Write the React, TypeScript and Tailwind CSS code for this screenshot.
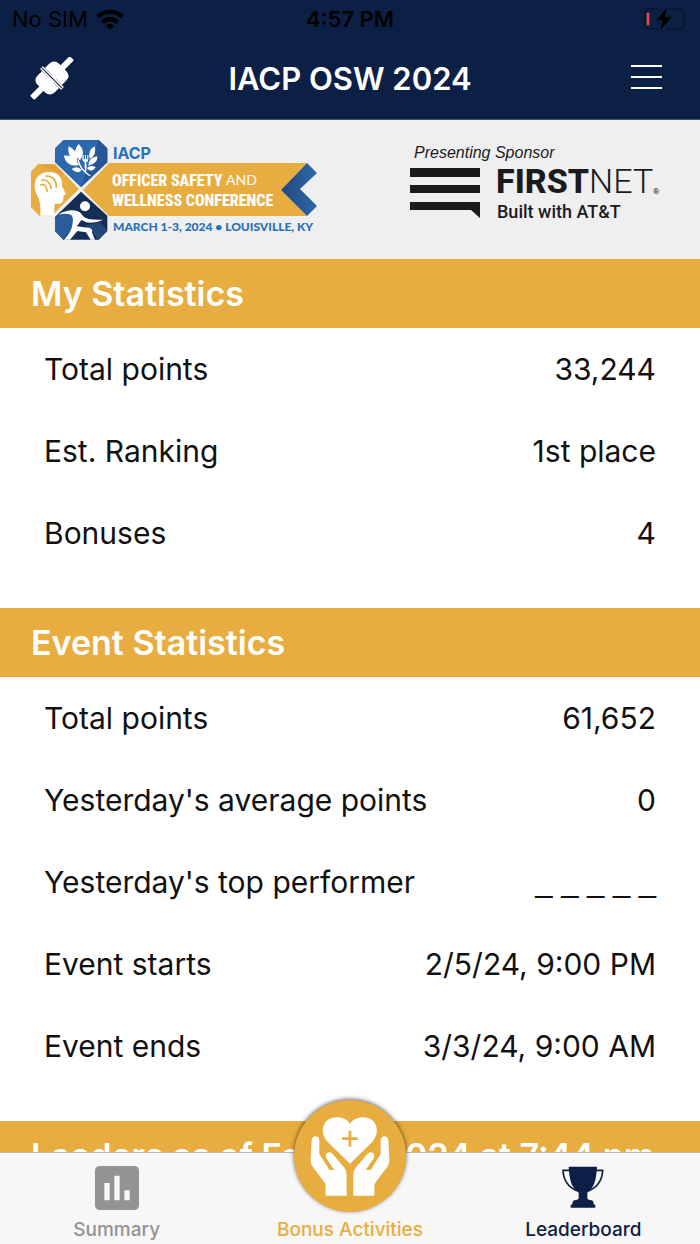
import React from "react";

interface StatItem {
  label: string;
  value: string;
}

interface StatSectionProps {
  title: string;
  items: StatItem[];
}

const myStats: StatItem[] = [
  { label: "Total points", value: "33,244" },
  { label: "Est. Ranking", value: "1st place" },
  { label: "Bonuses", value: "4" },
];

const eventStats: StatItem[] = [
  { label: "Total points", value: "61,652" },
  { label: "Yesterday's average points", value: "0" },
  { label: "Yesterday's top performer", value: "_ _ _ _ _" },
  { label: "Event starts", value: "2/5/24, 9:00 PM" },
  { label: "Event ends", value: "3/3/24, 9:00 AM" },
];

const SectionTitle: React.FC<{ children: React.ReactNode }> = ({ children }) => (
  <h2 className="flex h-[69px] items-center bg-[#e8ad40] px-[31px] text-[34px] font-semibold whitespace-nowrap text-white">
    {children}
  </h2>
);

const StatSection: React.FC<StatSectionProps> = ({ title, items }) => (
  <section>
    <SectionTitle>{title}</SectionTitle>
    <dl className="px-11 pb-[34px]">
      {items.map((item) => (
        <div key={item.label} className="flex h-[82px] items-center justify-between text-[30px] text-[#111]">
          <dt>{item.label}</dt>
          <dd className={item.value.startsWith("_") ? "font-['Liberation_Sans'] text-[31px]" : undefined}>{item.value}</dd>
        </div>
      ))}
    </dl>
  </section>
);

const StatusBar = () => (
  <div className="grid h-[38px] grid-cols-3 items-center px-3 text-[22px] text-black">
    <div className="flex items-center gap-2">
      <span>No SIM</span>
      <svg width="28" height="21" viewBox="0 0 84 62" fill="none" stroke="currentColor" strokeWidth="13">
        <path d="M5 23 C26 3 58 3 79 23" />
        <path d="M19 40 C32 27 52 27 65 40" />
        <path d="M42 62 L29 50 C37 43 47 43 55 50 Z" fill="currentColor" stroke="none" />
      </svg>
    </div>
    <span className="text-center font-semibold">4:57 PM</span>
    <svg className="justify-self-end" width="44" height="22" viewBox="0 0 132 66" fill="none">
      <path d="M42 3 H18 Q2 3 2 18 V48 Q2 63 18 63 H42 M76 3 H104 Q120 3 120 18 V48 Q120 63 104 63 H64" stroke="#07142d" strokeWidth="4" />
      <path d="M127 24 Q132 33 127 42 Z" fill="#07142d" />
      <rect x="8" y="14" width="8" height="38" rx="2" fill="#e5484d" />
      <path d="M68 0 L37 37 H56 L49 66 L83 28 H63 Z" fill="#000" />
    </svg>
  </div>
);

const Header = () => (
  <header className="h-[120px] shrink-0 border-b border-[#48506a] bg-[#0c2046] text-white">
    <StatusBar />
    <div className="grid h-[82px] grid-cols-[1fr_auto_1fr] items-center px-[30px]">
      <button type="button" aria-label="Connect device" className="justify-self-start">
        <svg width="44" height="44" viewBox="-22 -21 44 44" fill="currentColor">
          <g transform="rotate(-45)">
            <rect x="-28" y="-3" width="56" height="6" rx="1" />
            <path d="M-2 -12 H-8 Q-15 -12 -15 -5 V5 Q-15 12 -8 12 H-2 Z" />
            <path d="M2 -12 H8 Q15 -12 15 -5 V5 Q15 12 8 12 H2 Z" />
            <rect x="-2" y="-15" width="4" height="30" rx="1" />
            <path d="M0 -15 V15" stroke="#0c2046" strokeWidth="1" />
          </g>
        </svg>
      </button>
      <h1 className="text-[31px] font-semibold">IACP OSW 2024</h1>
      <button type="button" aria-label="Menu" className="mr-2 justify-self-end">
        <svg width="32" height="28" viewBox="0 0 32 28" stroke="currentColor" strokeWidth="2">
          <path d="M1 1 H32 M1 12 H32 M1 23 H32" />
        </svg>
      </button>
    </div>
  </header>
);

const ConferenceLogo = () => (
  <svg className="overflow-visible" width="290" height="104" viewBox="30 138 290 104" role="img" aria-label="IACP Officer Safety and Wellness Conference">
    <defs>
      <linearGradient id="arrow" x1="0" x2="1">
        <stop offset="0" stopColor="#234879" />
        <stop offset="1" stopColor="#2c68aa" />
      </linearGradient>
    </defs>
    <path d="M83 190 L109 163 H307 L281 190 L307 216 H109 Z" fill="#e8ad40" />
    <path d="M307 163 L317 173 L300 189 L317 206 L307 216 L281 190 Z" fill="url(#arrow)" />
    <g transform="translate(20 125) scale(0.33333)">
      {/* nutrition */}
      <path d="M130 45 H236 L262 70 V112 L183 187 L105 112 V70 Z" fill="#2b68ae" />
      <path d="M236 45 L262 70 V112 L183 187 Z" fill="#245794" />
      <g fill="#fff">
        <path d="M176 57 Q200 80 180 106 Q153 84 176 57 Z" />
        <path d="M146 64 Q176 78 171 110 Q140 98 146 64 Z" />
        <path d="M131 92 Q162 88 177 120 Q141 129 131 92 Z" />
        <path d="M155 132 Q171 120 185 134 Q173 150 155 132 Z" />
        <path d="M224 64 Q231 91 210 101 Q201 77 224 64 Z" />
        <path d="M232 94 Q233 117 205 122 Q206 97 232 94 Z" />
        <path d="M227 127 Q214 146 201 130 Q211 117 227 127 Z" />
        <path d="M187 90 V103 Q188 111 194 112 V130 H199 V112 Q205 110 205 103 V90 H202 V103 H198 V90 H195 V103 H191 V90 Z" />
      </g>
      <path d="M174 104 Q180 135 211 153 M197 118 V143" fill="none" stroke="#fff" strokeWidth="4" />

      {/* mental health */}
      <path d="M55 117 H105 L177 192 L105 262 L94 272 H58 L33 247 V140 Z" fill="#e8ad40" />
      <path d="M60 120 H102 L132 150 L98 137 Z" fill="#dfa238" />
      <path d="M61 272 Q64 231 51 210 C36 176 46 142 88 141 C116 141 130 162 126 183 L138 208 L130 212 L131 218 L129 224 Q128 236 117 236 H104 L102 272 Z" fill="#fff" />
      <path d="M63 166 Q88 160 94 192 M60 180 Q80 174 82 201 M75 153 Q109 151 109 188" fill="none" stroke="#e8ad40" strokeWidth="5" />

      {/* fitness */}
      <path d="M183 200 L262 272 V318 L236 344 H130 L105 318 V276 Z" fill="#152d55" />
      <path d="M130 258 L105 279 V318 L130 344 L180 280 Z" fill="#2b5d98" />
      <path d="M196 301 L240 292 L261 315 L236 344 Z" fill="#234776" />
      <circle cx="195" cy="244" r="15" fill="#fff" />
      <path d="M115 270 Q142 251 172 258 Q182 261 189 273 Q202 287 250 284 Q225 296 199 292 L184 285 Q176 297 170 304 L209 309 Q219 313 216 323 L225 344 H212 L198 322 L172 318 L150 344 H132 Q157 318 158 293 Q161 278 154 270 Q137 262 115 270 Z" fill="#fff" />
    </g>
    <text x="113" y="159" className="fill-[#2871b7] font-[Inter] text-[16px] font-bold">IACP</text>
    <g className="fill-white font-['Liberation_Sans_Narrow','Roboto_Condensed','Liberation_Sans'] font-extrabold">
      <text x="112" y="186" className="text-[16px]">OFFICER SAFETY</text>
      <text x="112" y="206" className="text-[16px]">WELLNESS CONFERENCE</text>
    </g>
    <text x="226" y="185" className="fill-white font-[Lato] text-[14px]">AND</text>
    <text x="113" y="231" className="fill-[#2871b7] font-[Lato] text-[12px] font-black">MARCH 1-3, 2024 • LOUISVILLE, KY</text>
  </svg>
);

const SponsorLogo = () => (
  <svg className="overflow-visible" width="249" height="104" viewBox="409 138 249 104" fill="#1b1b1d" role="img" aria-label="Presenting Sponsor FirstNet, Built with AT&T">
    <text x="414" y="158" className="font-['Liberation_Sans'] text-[16px] italic">Presenting Sponsor</text>
    <path d="M410 168 H480 V177 H410 Z M410 185 H480 V193 H410 Z M410 202 H480 V218 L471 210 H410 Z" />
    <text x="496" y="193" className="font-[Roboto] text-[34px] font-extrabold">
      FIRST<tspan className="font-light">NET</tspan>
    </text>
    <text x="653" y="194" className="font-[Roboto] text-[8px]">®</text>
    <text x="497" y="218" className="font-[Roboto] text-[18px] font-medium">Built with AT&amp;T</text>
  </svg>
);

const SummaryIcon = () => (
  <svg width="44" height="44" viewBox="0 0 132 132">
    <rect width="132" height="132" rx="14" fill="#939393" />
    <path d="M28 51 H44 V103 H28 Z M58 29 H74 V103 H58 Z M88 73 H104 V103 H88 Z" fill="#f7f7f7" />
  </svg>
);

const CareIcon = () => (
  <svg width="80" height="80" viewBox="180 108 240 240" fill="#fff">
    <path d="M300 251 L234 187 C204 154 220 112 262 112 C281 112 294 121 300 132 C306 121 320 112 338 112 C379 112 395 154 366 187 Z" />
    <path d="M276 176 H323 M300 152 V200" stroke="#e8ad40" strokeWidth="8" />
    <path d="M185 180 Q187 169 197 169 Q207 170 208 181 V222 L238 270 H253 L229 235 Q224 222 233 218 Q239 214 247 221 L282 262 Q290 272 290 285 V347 H227 V320 Q227 311 221 304 L188 260 Q182 252 182 240 Z" />
    <path d="M415 180 Q413 169 403 169 Q393 170 392 181 V222 L362 270 H347 L371 235 Q376 222 367 218 Q361 214 353 221 L318 262 Q310 272 310 285 V347 H373 V320 Q373 311 379 304 L412 260 Q418 252 418 240 Z" />
  </svg>
);

const TrophyIcon = () => (
  <svg width="42" height="44" viewBox="337 260 126 132" fill="#0c2046">
    <path d="M357 262 H442 C440 305 431 328 413 340 V358 Q416 362 425 363 Q432 364 432 375 L437 377 V385 H363 V377 L368 375 Q368 364 375 363 Q384 362 387 358 V340 C368 328 359 305 357 262 Z" />
    <path d="M359 273 H340 Q342 318 381 334 M440 273 H459 Q457 318 418 334" fill="none" stroke="#0c2046" strokeWidth="5" />
  </svg>
);

const TabBar = () => (
  <nav className="relative grid h-[92px] shrink-0 grid-cols-3 grid-rows-1 border-t border-[#b9b9b9] bg-[#f7f7f7] text-[19px] font-medium">
    <button type="button" className="flex min-h-0 flex-col items-center justify-end gap-1.5 text-[#939393]">
      <SummaryIcon />
      <span className="leading-7">Summary</span>
    </button>
    <button type="button" className="flex min-h-0 flex-col items-center justify-end gap-1 text-[#e8ad40]">
      <span className="flex size-28 shrink-0 items-center justify-center rounded-full bg-[#e8ad40] shadow-[0_-1px_4px_rgba(0,0,0,0.6)]">
        <CareIcon />
      </span>
      <span className="leading-7">Bonus Activities</span>
    </button>
    <button type="button" aria-current="page" className="flex min-h-0 flex-col items-center justify-end gap-1.5 text-[#0c2046]">
      <TrophyIcon />
      <span className="leading-7">Leaderboard</span>
    </button>
  </nav>
);

const App = () => {
  return (
    <div className="flex h-screen flex-col bg-white font-[Inter,sans-serif]">
      <Header />
      <main className="min-h-0 flex-1 overflow-y-auto [scrollbar-width:none]">
        <div className="flex h-[139px] items-center justify-between bg-[#efefef] pr-[42px] pl-[30px]">
          <ConferenceLogo />
          <SponsorLogo />
        </div>
        <StatSection title="My Statistics" items={myStats} />
        <StatSection title="Event Statistics" items={eventStats} />
        <SectionTitle>Leaders as of Feb 15, 2024 at 7:44 pm</SectionTitle>
      </main>
      <TabBar />
    </div>
  );
};

export default App;
